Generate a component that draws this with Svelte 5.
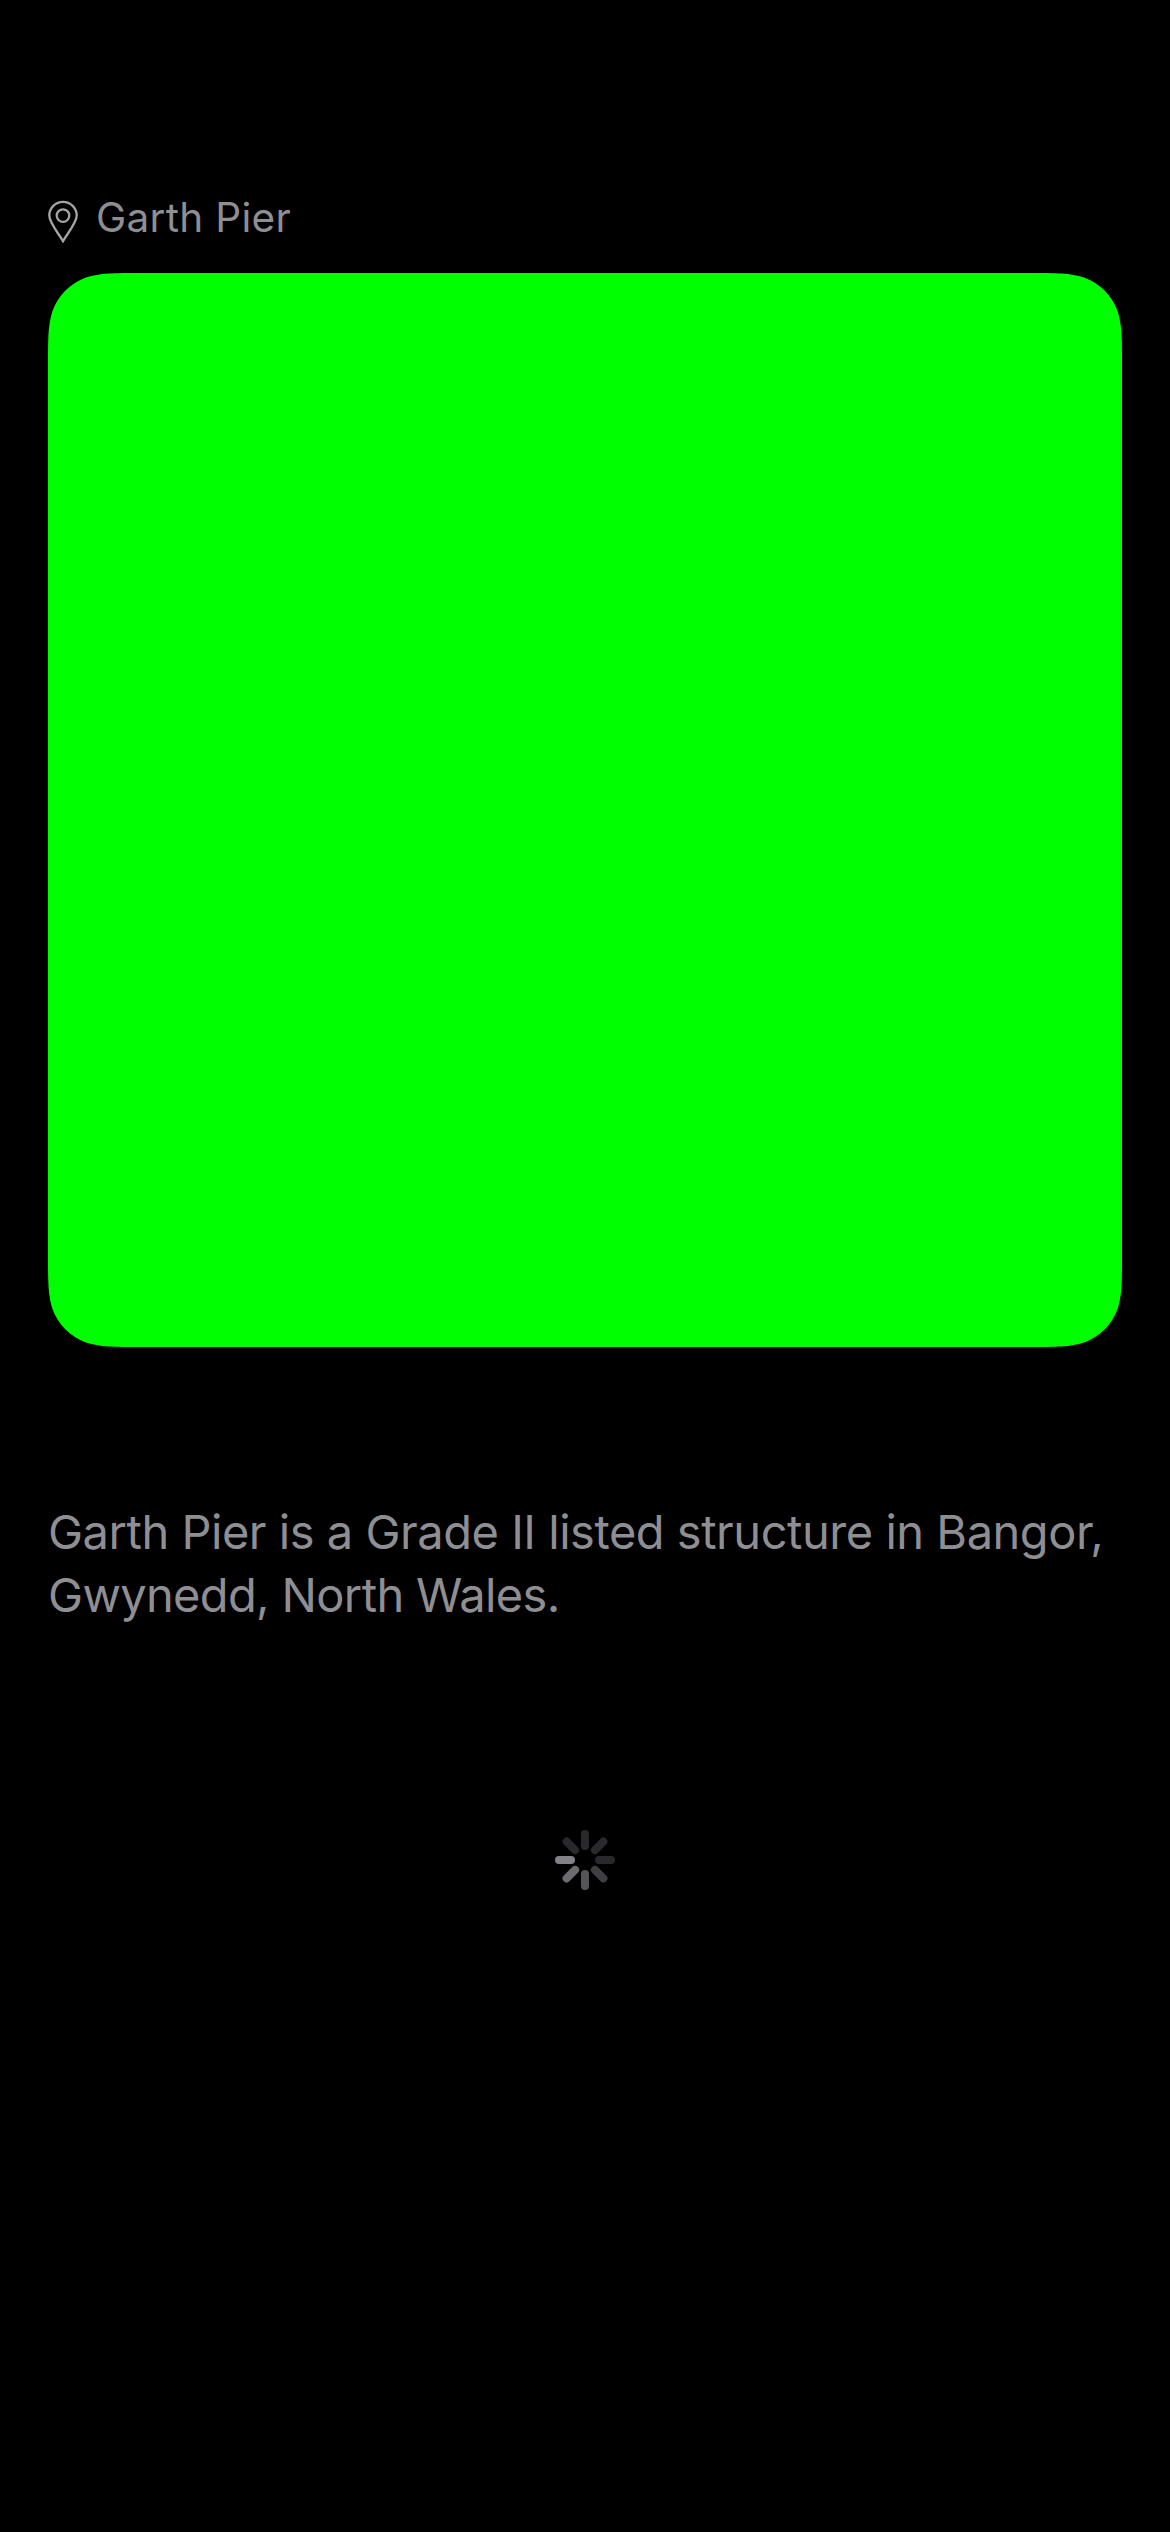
<script>
  // Spinner blades, clockwise from the top.
  const blades = ['#29292b', '#29292b', '#29292b', '#3f3f42', '#555558', '#6b6b70', '#818187', '#29292b'];

  // Rounded square with continuous-curvature corners.
  const size = 1074;
  const r = 60;
  const corner =
    [[1.528665, 0], [1.088493, 0], [0.868407, 0], [0.631494, 0.074911], [0.372824, 0.16906],
     [0.16906, 0.372824], [0.074911, 0.631494], [0, 0.868407], [0, 1.088493], [0, 1.528665]]
      .map(([x, y]) => [x * r, y * r]);

  function arc(command, points) {
    const p = points.map(([x, y]) => `${x.toFixed(2)} ${y.toFixed(2)}`);
    return `${command}${p[0]}C${p[1]} ${p[2]} ${p[3]}C${p[4]} ${p[5]} ${p[6]}C${p[7]} ${p[8]} ${p[9]}`;
  }
  const flipX = (pts) => pts.map(([x, y]) => [size - x, y]);
  const flipY = (pts) => pts.map(([x, y]) => [x, size - y]);
  const outline =
    arc('M', corner) +
    arc('L', flipY(corner).reverse()) +
    arc('L', flipX(flipY(corner))) +
    arc('L', flipX(corner).reverse()) + 'Z';
</script>

<main>
  <header>
    <svg class="pin" width="30" height="44" viewBox="0 0 30 44" aria-hidden="true">
      <path d="M15 41.2C10.8 33.6 1.3 23 1.3 15.6A13.7 13.7 0 0 1 28.7 15.6C28.7 23 19.2 33.6 15 41.2Z" />
      <circle cx="15" cy="15.6" r="6.3" />
    </svg>
    <span class="place">Garth Pier</span>
  </header>
  <svg class="photo" viewBox="0 0 {size} {size}" aria-hidden="true"><path d={outline} /></svg>
  <p>Garth Pier is a Grade II listed structure in Bangor, Gwynedd, North Wales.</p>
  <svg class="spinner" viewBox="-30 -30 60 60" role="img" aria-label="Loading">
    {#each blades as color, i}
      <rect x="-4" y="-30" width="8" height="20" rx="4" fill={color} transform="rotate({i * 45})" />
    {/each}
  </svg>
</main>

<style>
  :global(body) {
    background: #000;
  }
  main {
    box-sizing: border-box;
    height: 2532px;
    padding: 187px 48px 0;
    display: flex;
    flex-direction: column;
    color: #8e8e93;
    font-family: Inter, sans-serif;
  }
  header {
    display: flex;
    height: 60px;
    margin-bottom: 26px;
  }
  .pin {
    flex: none;
    margin: 13px 18px 0 0;
    fill: none;
    stroke: #a4a4a4;
    stroke-width: 2.3;
  }
  .place {
    font-size: 40.5px;
    line-height: 62px;
    letter-spacing: 0.3px;
    white-space: nowrap;
  }
  .photo {
    flex: none;
    width: 1074px;
    height: 1074px;
    fill: #0f0;
  }
  p {
    margin: 153px 0 0;
    font-size: 47px;
    line-height: 63px;
    letter-spacing: -0.65px;
  }
  p::first-line {
    letter-spacing: -0.47px;
  }
  .spinner {
    width: 60px;
    height: 60px;
    align-self: center;
    margin-top: 204px;
  }
</style>
